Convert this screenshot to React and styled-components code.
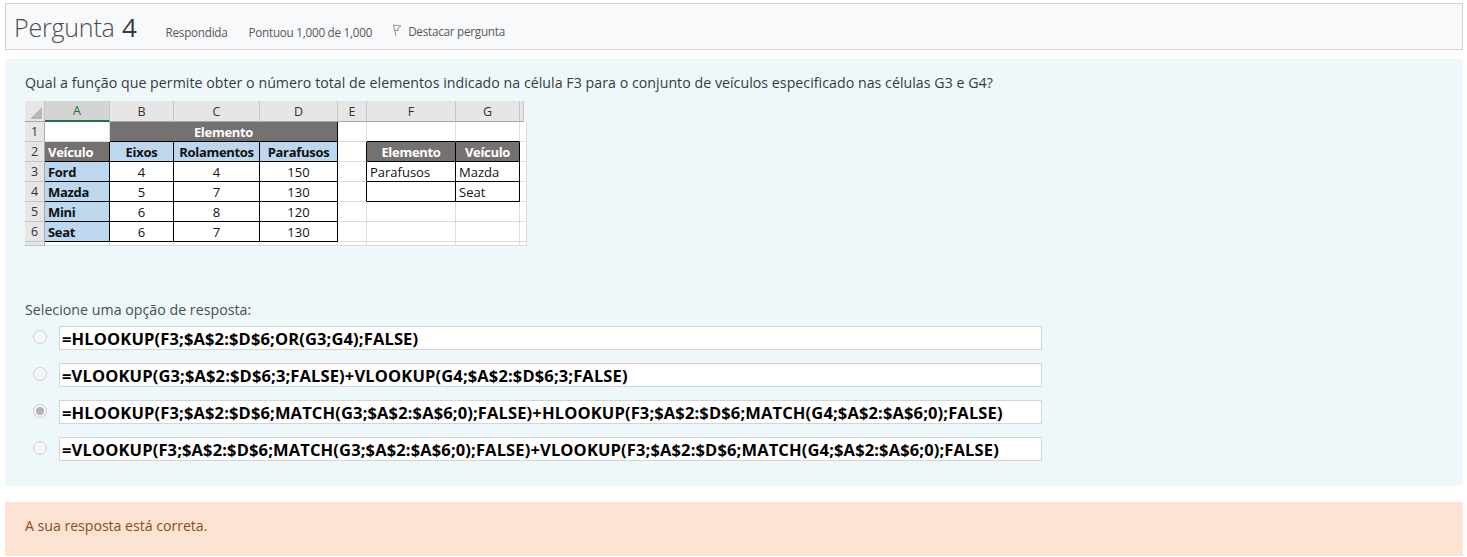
import React from "react";
import styled, { createGlobalStyle } from "styled-components";

const Global = createGlobalStyle`
  html, body { margin: 0; padding: 0; background: #fff; }
  body { font-family: "Open Sans", "Noto Sans", sans-serif; color: #373a3c; }
`;
const Page = styled.div`
  display: flex; flex-direction: column;
  width: 1467px; height: 557px; box-sizing: border-box; padding: 3px 4px 0 5px; overflow: hidden;
`;
const Header = styled.header`
  display: flex; align-items: baseline; box-sizing: border-box; height: 47px;
  border: 1px solid #cfd1d3; background: #f8f9fa; padding: 5px 0 0 8px;
`;
const Title = styled.h3`
  margin: 0; font-weight: 300; font-size: 25px; line-height: 36px; color: #4a4d4f; letter-spacing: -0.2px;
  b { font-weight: 400; color: #373a3c; font-size: 26px; margin-left: 1px; }
`;
const Meta = styled.span`
  font-size: 11.7px; color: #55585a; margin-left: ${p => p.$gap}px; letter-spacing: -0.25px;
  display: inline-flex; align-items: center; gap: 6px;
`;
const Question = styled.section`
  margin-top: 9px; height: 427px; background: #eef8fb; box-sizing: border-box; padding: 14px 20px 0;
`;
const Prompt = styled.p`
  margin: 0; font-size: 14.2px; line-height: 20px; letter-spacing: 0.03px; color: #373a3c;
`;
const Sheet = styled.div`
  display: grid; margin-top: 8px; width: 499px; background: #fff;
  grid-template-columns: 20px 65px 64px 86px 78px 29px 89px 64px 4px;
  grid-template-rows: 21px repeat(6, 20px) 4px;
`;
const Cell = styled.div`
  box-sizing: border-box; display: flex; align-items: center; overflow: hidden; white-space: nowrap;
  font-size: 13px; padding: 0 3px;
  letter-spacing: ${p => (p.$bold ? "-0.3px" : "0")};
  justify-content: ${p => (p.$center ? "center" : "flex-start")};
  font-weight: ${p => (p.$bold ? 700 : 400)};
  grid-column: ${p => (p.$span ? `span ${p.$span}` : "auto")};
  background: ${p => p.$bg || "#fff"};
  color: ${p => p.$color || "#111"};
  border-right: 1px solid ${p => (p.$ruled || p.$edge ? "#000" : "#dcdcdc")};
  border-bottom: 1px solid ${p => (p.$ruled || p.$under ? "#000" : "#dcdcdc")};
`;
const HeadCell = styled.div`
  box-sizing: border-box; display: flex; align-items: center; justify-content: center;
  font-size: 12.5px; color: #333; background: #e6e6e6;
  border-right: 1px solid #c4c4c4;
  border-bottom: ${p => (p.$active ? "2px solid #217346" : "1px solid #a8a8a8")};
  ${p => p.$active && "color:#217346; background:#d4d4d4;"}
`;
const Corner = styled(HeadCell)`
  position: relative;
  svg { position: absolute; right: 2px; bottom: 2px; }
`;
const RowNum = styled(HeadCell)`
  background: #e6e6e6; border-bottom: 1px solid #c4c4c4; border-right: 1px solid #a8a8a8;
`;
const PromptLabel = styled.p`
  margin: 54px 0 0; font-size: 14.2px; line-height: 20px; letter-spacing: 0.02px; color: #4a4d4f;
`;
const Options = styled.div`
  display: flex; flex-direction: column; gap: 13px; margin-top: 6px;
`;
const Option = styled.label`
  display: flex; align-items: flex-start; padding-left: 8px;
`;
const Radio = styled.span`
  box-sizing: border-box; width: 14px; height: 14px; border-radius: 50%; margin-top: 4px;
  border: 1px solid #cfcfcf; background: #f5f6f6; display: flex; align-items: center; justify-content: center;
  &::after { content: ""; width: 8px; height: 8px; border-radius: 50%; background: ${p => (p.$checked ? "#b4b4b4" : "transparent")}; }
`;
const Answer = styled.div`
  box-sizing: border-box; width: 983px; height: 24px; margin-left: 12px; padding-left: 2px;
  background: #fff; border: 1px solid #d4d4d4; font-size: 16.5px; font-weight: 700; line-height: 24px; color: #000;
  letter-spacing: 0.14px; white-space: nowrap;
`;
const Feedback = styled.section`
  margin-top: 16px; height: 54px; box-sizing: border-box; padding: 14px 20px 0;
  background: #fde3d3; color: #8a4b22; font-size: 14.2px; line-height: 20px; letter-spacing: -0.05px;
`;

const G = "#767171", B = "#bdd7ee";
const cols = ["A", "B", "C", "D", "E", "F", "G"];
const veh = [["Ford", 4, 4, 150, "Parafusos", "Mazda"], ["Mazda", 5, 7, 130, "", "Seat"], ["Mini", 6, 8, 120], ["Seat", 6, 7, 130]];
const answers = [
  "=HLOOKUP(F3;$A$2:$D$6;OR(G3;G4);FALSE)",
  "=VLOOKUP(G3;$A$2:$D$6;3;FALSE)+VLOOKUP(G4;$A$2:$D$6;3;FALSE)",
  "=HLOOKUP(F3;$A$2:$D$6;MATCH(G3;$A$2:$A$6;0);FALSE)+HLOOKUP(F3;$A$2:$D$6;MATCH(G4;$A$2:$A$6;0);FALSE)",
  "=VLOOKUP(F3;$A$2:$D$6;MATCH(G3;$A$2:$A$6;0);FALSE)+VLOOKUP(F3;$A$2:$D$6;MATCH(G4;$A$2:$A$6;0);FALSE)",
];

export default function App() {
  return (
    <Page>
      <Global />
      <Header>
        <Title>Pergunta <b>4</b></Title>
        <Meta $gap={29}>Respondida</Meta>
        <Meta $gap={21}>Pontuou 1,000 de 1,000</Meta>
        <Meta $gap={20}>
          <svg width="10" height="13" viewBox="0 0 10 13" fill="none" stroke="#888" strokeWidth="0.9">
            <path d="M1.5 1 L4 12 M1.5 1 L9 2 L5.5 4.5 L6.5 6.5 L2.6 6.5" />
          </svg>
          Destacar pergunta
        </Meta>
      </Header>
      <Question>
        <Prompt>Qual a função que permite obter o número total de elementos indicado na célula F3 para o conjunto de veículos especificado nas células G3 e G4?</Prompt>
        <Sheet>
          <Corner><svg width="12" height="12"><path d="M12 0V12H0Z" fill="#b5b5b5" /></svg></Corner>
          {cols.map(c => <HeadCell key={c} $active={c === "A"}>{c}</HeadCell>)}
          <HeadCell />
          <RowNum>1</RowNum>
          <Cell />
          <Cell $span={3} $bg={G} $color="#fff" $bold $center $ruled>Elemento</Cell>
          <Cell /><Cell $under /><Cell $under /><Cell />
          <RowNum>2</RowNum>
          <Cell $bg={G} $color="#fff" $bold $ruled>Veículo</Cell>
          <Cell $bg={B} $bold $center $ruled>Eixos</Cell>
          <Cell $bg={B} $bold $center $ruled>Rolamentos</Cell>
          <Cell $bg={B} $bold $center $ruled>Parafusos</Cell>
          <Cell $edge />
          <Cell $bg={G} $color="#fff" $bold $center $ruled>Elemento</Cell>
          <Cell $bg={G} $color="#fff" $bold $center $ruled>Veículo</Cell>
          <Cell />
          {veh.map((r, i) => (
            <React.Fragment key={r[0]}>
              <RowNum>{i + 3}</RowNum>
              <Cell $bg={B} $bold $ruled>{r[0]}</Cell>
              <Cell $center $ruled>{r[1]}</Cell>
              <Cell $center $ruled>{r[2]}</Cell>
              <Cell $center $ruled>{r[3]}</Cell>
              <Cell $edge={i < 2} />
              <Cell $ruled={i < 2}>{r[4]}</Cell>
              <Cell $ruled={i < 2}>{r[5]}</Cell>
              <Cell />
            </React.Fragment>
          ))}
          <RowNum />
          <Cell /><Cell /><Cell /><Cell /><Cell /><Cell /><Cell /><Cell />
        </Sheet>
        <PromptLabel>Selecione uma opção de resposta:</PromptLabel>
        <Options>
          {answers.map((a, i) => (
            <Option key={a}>
              <Radio $checked={i === 2} />
              <Answer>{a}</Answer>
            </Option>
          ))}
        </Options>
      </Question>
      <Feedback>A sua resposta está correta.</Feedback>
    </Page>
  );
}
